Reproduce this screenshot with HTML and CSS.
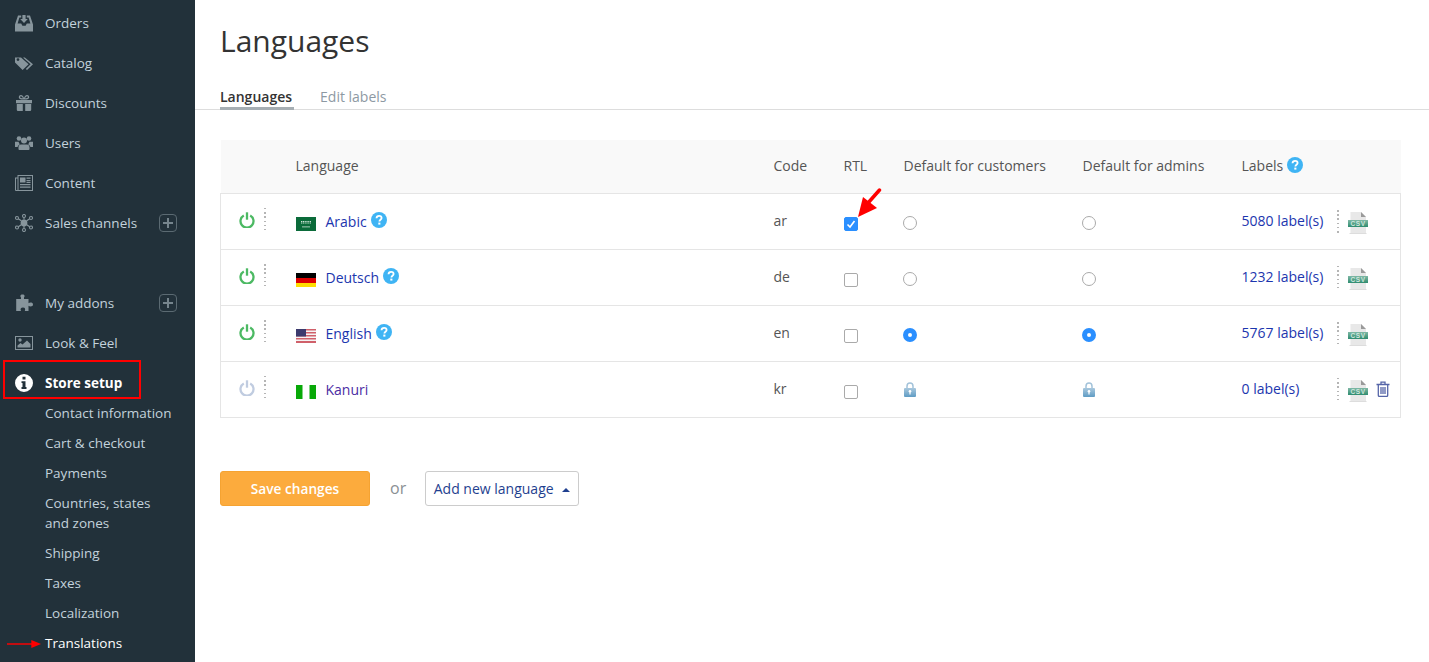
FILE: index.html
```html
<!DOCTYPE html>
<html lang="en">
<head>
  <meta charset="UTF-8" />
  <title>Languages</title>
  <link rel="stylesheet" href="styles.css">
</head>
<body>
<aside class="sidebar">
  <ul class="nav">
    <li class="nav-item">
      <svg class="nav-icon" viewBox="0 0 18 18"><path d="M0 10.500 3 1.500h3.200v2H4.400L2.600 9.500h3.600l1.200 2.200h3.200l1.200-2.200h3.600l-1.800-6h-1.800v-2H15l3 9v7H0z"/><path d="M7.400 1h3.200v4h2.200L9 9 5.200 5h2.200z"/></svg>
      <span>Orders</span>
    </li>
    <li class="nav-item">
      <svg class="nav-icon" viewBox="0 0 18 18"><path d="M0 3.500V8.600l7.600 7.400 6-5.800L6 3.500zM3 7a1.400 1.400 0 1 1 0-2.800A1.400 1.400 0 0 1 3 7z"/><path d="M8 3.500h1.800l8.200 6.800-6 5.700-1.200-1.100 4.800-4.700z"/></svg>
      <span>Catalog</span>
    </li>
    <li class="nav-item">
      <svg class="nav-icon" viewBox="0 0 18 18"><path d="M1 6h6.800v3.200H1zM10.200 6H17v3.200h-6.800zM1.800 10H7.800v7H3a1.200 1.200 0 0 1-1.200-1.200zM10.200 10h6v5.800A1.200 1.200 0 0 1 15 17h-4.800zM7.800 6h2.400v3.200H7.800z"/><path d="M9 5.500C7 5.500 3.800 5.300 3.800 3.200 3.800 1.800 4.800 1 5.900 1 7.500 1 8.600 2.800 9 4.200 9.400 2.800 10.500 1 12.100 1c1.100 0 2.100.8 2.100 2.200 0 2.100-3.200 2.300-5.200 2.300zM5.900 2.300c-.5 0-.8.400-.8.900 0 .8 1.500 1 2.800 1-.4-1-1.100-1.900-2-1.900zm6.200 0c-.9 0-1.600.9-2 1.900 1.300 0 2.800-.2 2.800-1 0-.5-.3-.9-.8-.9z"/></svg>
      <span>Discounts</span>
    </li>
    <li class="nav-item">
      <svg class="nav-icon" viewBox="0 0 18 18"><circle cx="4" cy="4.500" r="2.300"/><circle cx="14" cy="4.500" r="2.300"/><circle cx="9" cy="6.500" r="3"/><path d="M0 7.800h3.600c.2 1 .7 1.900 1.400 2.400-1.300.5-2.200 1.600-2.400 2.800H0zM18 7.800h-3.600c-.2 1-.7 1.900-1.400 2.400 1.300.5 2.200 1.600 2.400 2.800H18z"/><path d="M6 10.500h6c1.500 0 2.500 1.200 2.500 2.800v1.900c0 .5-.4.800-.8.800H4.300c-.4 0-.8-.3-.8-.8v-1.900c0-1.600 1-2.800 2.500-2.800z"/></svg>
      <span>Users</span>
    </li>
    <li class="nav-item">
      <svg class="nav-icon" viewBox="0 0 18 18"><path fill-rule="evenodd" d="M2.500 1H18v16H1a1 1 0 0 1-1-1V3.500h2.500zM3.500 2v14H17V2zM1 4.500V16h1.500V4.500z"/><path d="M5 3.500h5.500v5H5zM11.500 3.500h4v1.200h-4zM11.500 6h4v1.200h-4zM11.500 8h4v1h-4zM5 10h10.500v1.200H5zM5 12.500h10.500v1.200H5z"/></svg>
      <span>Content</span>
    </li>
    <li class="nav-item">
      <svg class="nav-icon" viewBox="0 0 18 18"><g fill="none"><circle cx="2" cy="4" r="1.500"/><circle cx="16" cy="4" r="1.500"/><circle cx="2" cy="13.500" r="1.500"/><circle cx="16" cy="13.500" r="1.500"/><circle cx="9" cy="2" r="1.500"/><circle cx="9" cy="16" r="1.500"/><path d="M3.300 4.800l3 2M14.700 4.800l-3 2M3.300 12.700l3-2M14.700 12.700l-3-2M9 3.500v2M9 12v2.500"/></g><circle cx="9" cy="9" r="3.400"/></svg>
      <span>Sales channels</span>
      <i class="nav-plus"></i>
    </li>
  </ul>

  <ul class="nav nav-lower">
    <li class="nav-item">
      <svg class="nav-icon" viewBox="0 0 18 18"><path d="M6 3.500C5 2.500 5 .5 7.500.5S10 2.500 9 3.500v1.500h4.500v4.200c1-1 4.500-1.200 4.500 1.300s-3.500 2.200-4.500 1.300V17H9.800c.8-2 .4-3.400-1.800-3.400S5 15 6 17H1.200V5H6z"/></svg>
      <span>My addons</span>
      <i class="nav-plus"></i>
    </li>
    <li class="nav-item">
      <svg class="nav-icon" viewBox="0 0 18 18"><path fill-rule="evenodd" d="M0 2h18v14H0zM1 3v12h16V3z"/><circle cx="5" cy="6" r="1.700"/><path d="M2.500 13.500v-2l3-2.500 2 1.500L12 6.500l3.500 3.500v3.500z"/></svg>
      <span>Look &amp; Feel</span>
    </li>
    <li class="nav-item nav-item-active">
      <svg class="nav-icon" viewBox="0 0 18 18"><path fill-rule="evenodd" d="M9 0a9 9 0 1 1 0 18A9 9 0 0 1 9 0zM7.500 2.800v2.800h3V2.800zM6.500 7.200v1.800h1v4H6.500v2h5v-2h-1V7.200z"/></svg>
      <span>Store setup</span>
    </li>
  </ul>

  <ul class="subnav">
    <li>Contact information</li>
    <li>Cart &amp; checkout</li>
    <li>Payments</li>
    <li>Countries, states<br>and zones</li>
    <li>Shipping</li>
    <li>Taxes</li>
    <li>Localization</li>
    <li class="subnav-active">Translations</li>
  </ul>
</aside>

<main class="content">
  <h1 class="page-title">Languages</h1>

  <div class="tabs">
    <a class="tab tab-active">Languages</a>
    <a class="tab">Edit labels</a>
  </div>

  <table class="lang-table">
    <colgroup>
      <col class="col-status"><col class="col-lang"><col class="col-code"><col class="col-rtl"><col class="col-cust"><col class="col-admin"><col>
    </colgroup>
    <thead>
      <tr>
        <th></th>
        <th>Language</th>
        <th>Code</th>
        <th>RTL</th>
        <th>Default for customers</th>
        <th>Default for admins</th>
        <th><span class="with-help">Labels <svg class="help" viewBox="0 0 16 16"><use href="#help-icon"/></svg></span></th>
      </tr>
    </thead>
    <tbody>
      <tr>
        <td><span class="status"><svg class="power" viewBox="0 0 16 16"><use href="#power-icon"/></svg><i class="grip"></i></span></td>
        <td>
          <span class="lang">
            <svg class="flag" viewBox="0 0 20 14"><rect width="20" height="14" fill="#0b6b3a"/><path d="M5 4.500h10M5 6h10" stroke="#cfe3d7" stroke-width="1.200" stroke-dasharray="1.200 .6"/><rect x="6" y="9.500" width="8" height=".8" fill="#cfe3d7"/></svg>
            <a class="lang-link">Arabic</a>
            <svg class="help" viewBox="0 0 16 16"><use href="#help-icon"/></svg>
          </span>
        </td>
        <td class="code">ar</td>
        <td><span class="check check-on"><svg viewBox="0 0 14 14"><path d="M3.500 7.500 6 10l4.500-6" fill="none" stroke="#fff" stroke-width="1.600"/></svg></span></td>
        <td><span class="radio"></span></td>
        <td><span class="radio"></span></td>
        <td><span class="labels"><a class="labels-link">5080 label(s)</a><i class="grip"></i><svg class="csv" viewBox="0 0 20 22"><use href="#csv-icon"/></svg></span></td>
      </tr>
      <tr>
        <td><span class="status"><svg class="power" viewBox="0 0 16 16"><use href="#power-icon"/></svg><i class="grip"></i></span></td>
        <td>
          <span class="lang">
            <svg class="flag" viewBox="0 0 20 14"><rect width="20" height="5" fill="#000"/><rect y="5" width="20" height="5" fill="#dd0000"/><rect y="10" width="20" height="4" fill="#ffdd00"/></svg>
            <a class="lang-link">Deutsch</a>
            <svg class="help" viewBox="0 0 16 16"><use href="#help-icon"/></svg>
          </span>
        </td>
        <td class="code">de</td>
        <td><span class="check"></span></td>
        <td><span class="radio"></span></td>
        <td><span class="radio"></span></td>
        <td><span class="labels"><a class="labels-link">1232 label(s)</a><i class="grip"></i><svg class="csv" viewBox="0 0 20 22"><use href="#csv-icon"/></svg></span></td>
      </tr>
      <tr>
        <td><span class="status"><svg class="power" viewBox="0 0 16 16"><use href="#power-icon"/></svg><i class="grip"></i></span></td>
        <td>
          <span class="lang">
            <svg class="flag" viewBox="0 0 20 14"><rect width="20" height="14" fill="#f4f4f4"/><path d="M0 0h20v1.500H0zM0 3h20v1.500H0zM0 6h20v1.500H0zM0 9h20v1.500H0zM0 12h20v2H0z" fill="#d0606a"/><rect width="10" height="7.500" fill="#3c3b6e"/></svg>
            <a class="lang-link">English</a>
            <svg class="help" viewBox="0 0 16 16"><use href="#help-icon"/></svg>
          </span>
        </td>
        <td class="code">en</td>
        <td><span class="check"></span></td>
        <td><span class="radio radio-on"></span></td>
        <td><span class="radio radio-on"></span></td>
        <td><span class="labels"><a class="labels-link">5767 label(s)</a><i class="grip"></i><svg class="csv" viewBox="0 0 20 22"><use href="#csv-icon"/></svg></span></td>
      </tr>
      <tr>
        <td><span class="status"><svg class="power power-off" viewBox="0 0 16 16"><use href="#power-icon"/></svg><i class="grip"></i></span></td>
        <td>
          <span class="lang">
            <svg class="flag" viewBox="0 0 20 14"><rect width="20" height="14" fill="#fff"/><rect width="6.500" height="14" fill="#08a908"/><rect x="13.500" width="6.500" height="14" fill="#08a908"/></svg>
            <a class="lang-link lang-visited">Kanuri</a>
          </span>
        </td>
        <td class="code">kr</td>
        <td><span class="check"></span></td>
        <td><svg class="lock" viewBox="0 0 12 15"><use href="#lock-icon"/></svg></td>
        <td><svg class="lock" viewBox="0 0 12 15"><use href="#lock-icon"/></svg></td>
        <td>
          <span class="labels">
            <a class="labels-link">0 label(s)</a><i class="grip"></i><svg class="csv" viewBox="0 0 20 22"><use href="#csv-icon"/></svg>
            <svg class="trash" viewBox="0 0 14 16"><path d="M.5 3.500h13M5 3.300V1.200h4v2.100M2.300 3.500v10.800c0 .7.400 1.100 1 1.100h7.400c.6 0 1-.4 1-1.100V3.500M5 6v7M7 6v7M9 6v7" fill="none" stroke="#5565a8" stroke-width="1.300"/></svg>
          </span>
        </td>
      </tr>
    </tbody>
  </table>

  <div class="actions">
    <button class="btn-save" type="button">Save changes</button>
    <span class="or">or</span>
    <button class="btn-add" type="button">Add new language <i class="caret"></i></button>
  </div>
</main>

<!-- annotations drawn over the screenshot -->
<div class="mark-box"></div>
<svg class="mark-nav-arrow" viewBox="0 0 36 10"><path d="M0 5h26" stroke="#f00" stroke-width="1.500"/><path d="M25 1l10 4-10 4z" fill="#f00"/></svg>
<svg class="mark-rtl-arrow" viewBox="0 0 26 30"><path d="M22.500 2 11 15" stroke="#f00" stroke-width="3.500" stroke-linecap="round"/><path d="M1 29 6 9l14 11z" fill="#f00"/></svg>

<svg class="defs" width="0" height="0">
  <defs>
    <linearGradient id="lock-fill" x1="0" y1="0" x2="0" y2="1"><stop offset="0" stop-color="#a9c8de"/><stop offset="1" stop-color="#5f9cc4"/></linearGradient>
    <linearGradient id="csv-fill" x1="0" y1="0" x2="0" y2="1"><stop offset="0" stop-color="#7fb8a5"/><stop offset="1" stop-color="#2f8c70"/></linearGradient>
    <g id="power-icon" fill="none" stroke="currentColor" stroke-width="2.300"><path d="M4.800 3.400a6.500 6.500 0 1 0 6.400 0"/><path d="M8 .3v7.400"/></g>
    <g id="help-icon"><circle cx="8" cy="8" r="8" fill="#3fb4f4"/><path d="M5.500 6.200C5.600 4.700 6.700 3.800 8.100 3.800c1.500 0 2.500.9 2.500 2.100 0 1.800-2.200 1.900-2.200 3.500" fill="none" stroke="#fff" stroke-width="1.800"/><rect x="7.300" y="10.600" width="2.100" height="2" fill="#fff"/></g>
    <g id="lock-icon"><path d="M3 6.500V4.200C3 2.500 4.300 1 6 1s3 1.500 3 3.200v2.300" fill="none" stroke="#a3c3da" stroke-width="1.500"/><rect y="6" width="12" height="9" rx="1" fill="url(#lock-fill)"/><circle cx="6" cy="9.300" r="1.300" fill="#fff"/><rect x="5.400" y="9.500" width="1.200" height="3" fill="#fff"/></g>
    <g id="csv-icon">
      <path d="M2.500 0H13l5 5v16H2.500z" fill="#e8e8e8"/><path d="M13 0l5 5h-5z" fill="#9a9a9a"/>
      <rect y="8" width="20" height="7" fill="url(#csv-fill)"/>
      <text x="10" y="13.700" text-anchor="middle" font-size="6.500" font-weight="700" letter-spacing=".6" font-family="Liberation Sans, sans-serif" fill="#cfe6dd">CSV</text>
      <rect x="1.500" y="21" width="17" height="1" fill="#ddd"/>
    </g>
  </defs>
</svg>
</body>
</html>
```

FILE: styles.css
```css
* {
  box-sizing: border-box;
}

html, body {
  height: 100%;
}

body {
  display: flex;
  margin: 0;
  overflow: hidden;
  font-family: "Open Sans", sans-serif;
  font-size: 14px;
  color: #555;
  background: white;
}

ul {
  margin: 0;
  padding: 0;
  list-style: none;
}

.defs {
  position: absolute;
}

/* sidebar */
.sidebar {
  flex: 0 0 195px;
  height: 662px;
  padding-top: 3px;
  background: #22313a;
  color: #c3d2dc;
  font-size: 13.5px;
}

.nav-lower {
  margin-top: 40px;
}

.nav-item {
  display: flex;
  align-items: center;
  height: 40px;
  padding-left: 15px;
  line-height: 20px;
}

.nav-icon {
  flex: none;
  width: 18px;
  height: 18px;
  margin-right: 12px;
  fill: #87959c;
}

.nav-icon g {
  stroke: #87959c;
  stroke-width: 1.1;
}

.nav-plus {
  position: relative;
  width: 18px;
  height: 18px;
  margin-left: auto;
  margin-right: 18px;
  border: 1px solid #5b6a72;
  border-radius: 4px;
}

.nav-plus::before,
.nav-plus::after {
  content: "";
  position: absolute;
  background: #76858d;
}

.nav-plus::before {
  left: 3px;
  right: 3px;
  top: 7px;
  height: 2px;
}

.nav-plus::after {
  top: 3px;
  bottom: 3px;
  left: 7px;
  width: 2px;
}

.nav-item-active {
  height: 35px;
  padding-top: 5px;
  color: white;
  font-weight: 700;
}

.nav-item-active .nav-icon {
  fill: white;
}

.subnav li {
  padding: 5px 0 5px 45px;
  line-height: 20px;
}

.subnav-active {
  color: white;
}

/* main column */
.content {
  flex: 1;
  min-width: 0;
}

.page-title {
  margin: 0;
  padding: 21px 0 0 25px;
  font-size: 30px;
  font-weight: 400;
  line-height: 40px;
  color: #333;
}

.tabs {
  display: flex;
  gap: 26px;
  height: 49px;
  padding: 26px 0 0 25px;
  border-bottom: 1px solid #ddd;
}

.tab {
  height: 23px;
  line-height: 20px;
  color: #8d99a3;
}

.tab-active {
  padding-right: 2px;
  color: #333;
  font-weight: 600;
  border-bottom: 3px solid #a6aeb3;
}

.lang-table {
  width: 1181px;
  margin: 30px 0 0 25px;
  border-collapse: collapse;
  table-layout: fixed;
}

.col-status { width: 75px; }
.col-lang { width: 478px; }
.col-code { width: 70px; }
.col-rtl { width: 60px; }
.col-cust { width: 179px; }
.col-admin { width: 159px; }

.lang-table th {
  height: 53px;
  padding: 0 0 2px;
  background: #f9f9f9;
  font-weight: 400;
  text-align: left;
  color: #555;
}

.lang-table td {
  height: 56px;
  padding: 0;
  border-top: 1px solid #e5e5e5;
  border-bottom: 1px solid #e5e5e5;
  vertical-align: middle;
}

.lang-table td.code {
  padding-bottom: 2px;
}

.lang-table tr td:first-child {
  border-left: 1px solid #e5e5e5;
}

.lang-table tr td:last-child {
  border-right: 1px solid #e5e5e5;
}

.status {
  display: flex;
  align-items: center;
  padding-left: 18px;
  margin-top: -3px;
}

.power {
  width: 16px;
  height: 16px;
  margin-right: 9px;
  color: #4cb963;
}

.power-off {
  color: #c0cce0;
}

.grip {
  flex: none;
  display: block;
  width: 2px;
  height: 23px;
  background: repeating-linear-gradient(#b5b5b5 0 1.500px, transparent 1.500px 4.200px);
}

.lang {
  display: flex;
  align-items: center;
  gap: 10px;
}

.flag {
  width: 20px;
  height: 14px;
  margin-top: 5px;
}

.lang-link,
.labels-link {
  color: #1c36ae;
}

.lang-visited {
  color: #4b2ca3;
}

.with-help {
  display: inline-flex;
  align-items: center;
  gap: 4px;
}

.help {
  width: 16px;
  height: 16px;
  margin-left: -6px;
  margin-top: -3px;
}

.with-help .help {
  margin-left: 0;
  margin-top: 0;
}

.check,
.radio {
  display: block;
  width: 14px;
  height: 14px;
  margin-top: 4px;
  background: white;
  border: 1px solid #aaa;
}

.check {
  margin-top: 6px;
  border-radius: 2px;
}

.check svg {
  display: block;
  width: 14px;
  height: 14px;
  margin: -1px;
}

.check-on {
  background: #2a8fff;
  border-color: #2a8fff;
}

.radio {
  margin-left: -1px;
  border-radius: 50%;
}

.radio-on {
  background: white;
  border: 5px solid #2a8fff;
}

.lock {
  display: block;
  width: 12px;
  height: 15px;
}

.labels {
  display: flex;
  align-items: center;
  position: relative;
}

.labels-link {
  width: 95px;
  margin-top: -2px;
}

.labels .grip {
  margin-right: 9px;
}

.csv {
  width: 20px;
  height: 22px;
  margin-top: 3px;
}

.trash {
  width: 14px;
  height: 16px;
  margin-left: 8px;
}

/* buttons */
.actions {
  display: flex;
  align-items: center;
  margin: 53px 0 0 25px;
}

.btn-save,
.btn-add {
  height: 35px;
  font-family: inherit;
  font-size: 14px;
}

.btn-save {
  width: 150px;
  background: #fcab3d;
  border: 1px solid #f5a332;
  border-radius: 3px;
  color: white;
  font-size: 13.7px;
  font-weight: 600;
}

.or {
  width: 55px;
  padding-left: 20px;
  font-size: 16px;
  color: #8a8f94;
}

.btn-add {
  width: 154px;
  padding: 0;
  background: white;
  border: 1px solid #ccc;
  border-radius: 3px;
  color: #1f3f8f;
}

.caret {
  display: inline-block;
  margin-left: 5px;
  vertical-align: 2px;
  border-left: 4px solid transparent;
  border-right: 4px solid transparent;
  border-bottom: 4px solid #1f3f8f;
}

/* annotations */
.mark-box {
  position: absolute;
  left: 3px;
  top: 360px;
  width: 138px;
  height: 39px;
  border: 2px solid #f00;
}

.mark-nav-arrow {
  position: absolute;
  left: 7px;
  top: 639px;
  width: 35px;
  height: 10px;
}

.mark-rtl-arrow {
  position: absolute;
  left: 857px;
  top: 188px;
  width: 26px;
  height: 30px;
}
```
